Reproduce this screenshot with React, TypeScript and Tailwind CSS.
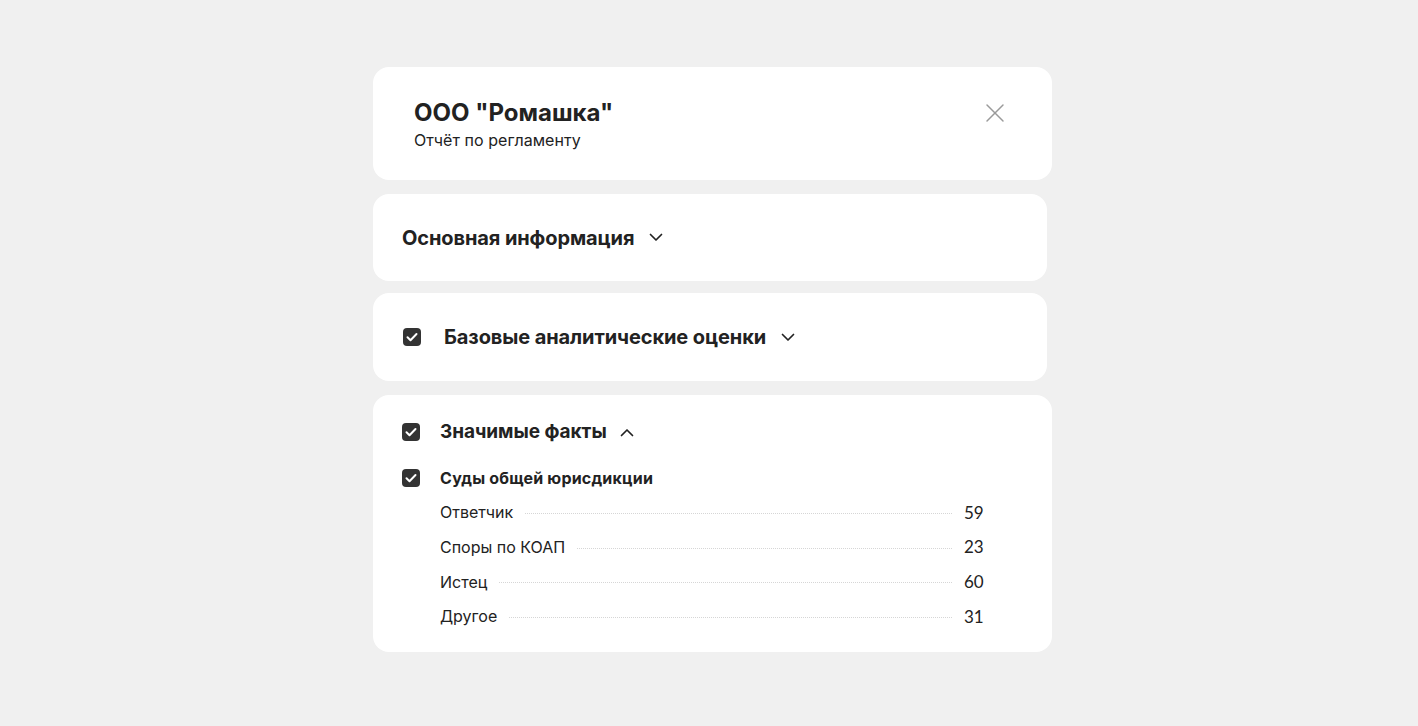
import { X } from 'lucide-react'

function Check({ className = '' }: { className?: string }) {
  return (
    <svg width="18" height="18" viewBox="0 0 18 18" className={className}>
      <rect x="0" y="0" width="18" height="18" rx="4" fill="#333333" />
      <path d="M4.5 9.3l3 2.9 6-6.2" fill="none" stroke="#fff" strokeWidth="2" strokeLinecap="round" strokeLinejoin="round" />
    </svg>
  )
}

function Chevron({ up = false }: { up?: boolean }) {
  return (
    <svg width="14" height="9" viewBox="0 0 14 9" className="shrink-0">
      <path d={up ? 'M1.5 7.5L7 2l5.5 5.5' : 'M1.5 1.5L7 7l5.5-5.5'} fill="none" stroke="#222" strokeWidth="1.7" strokeLinecap="round" strokeLinejoin="round" />
    </svg>
  )
}

const facts = [
  { label: 'Ответчик', value: 59 },
  { label: 'Споры по КОАП', value: 23 },
  { label: 'Истец', value: 60 },
  { label: 'Другое', value: 31 },
]

export default function App() {
  return (
    <div className="min-h-[726px] bg-[#f0f0f0] pl-[373px] pt-[67px] text-[#222] font-['Inter','Noto_Sans',sans-serif]">
      <div className="w-[679px] h-[113px] bg-white rounded-[16px] pl-[41px] pr-[41px] pt-[30px] flex justify-between">
        <div>
          <h1 className="text-[24px] leading-[30px] font-bold tracking-[0px] mt-[1px]">ООО "Ромашка"</h1>
          <p className="text-[16px] leading-[22px] mt-[1px] tracking-[0.05px]">Отчёт по регламенту</p>
        </div>
        <button className="text-[#9a9a9a] h-[32px]">
          <X size={32} strokeWidth={1.1} />
        </button>
      </div>

      <div className="w-[674px] h-[87px] bg-white rounded-[16px] mt-[14px] px-[29px] flex items-center gap-[15px]">
        <span className="text-[20px] font-bold tracking-[-0.1px]">Основная информация</span>
        <Chevron />
      </div>

      <div className="w-[674px] h-[88px] bg-white rounded-[16px] mt-[12px] px-[30px] flex items-center">
        <Check className="mr-[23px]" />
        <span className="text-[20px] font-bold tracking-[-0.1px] mr-[15px]">Базовые аналитические оценки</span>
        <Chevron />
      </div>

      <div className="w-[679px] h-[257px] bg-white rounded-[16px] mt-[14px] pl-[29px] pr-[68px] pt-[25px]">
        <div className="flex items-center h-[24px]">
          <Check className="mr-[20px]" />
          <span className="text-[19px] font-bold tracking-[-0.05px] mr-[13px]">Значимые факты</span>
          <Chevron up />
        </div>
        <div className="flex items-center h-[24px] mt-[22px]">
          <Check className="mr-[20px]" />
          <span className="text-[16px] font-bold tracking-[0.2px]">Суды общей юрисдикции</span>
        </div>
        <div className="pl-[38px] mt-[5px]">
          {facts.map((f) => (
            <div key={f.label} className="flex items-center h-[34.7px] text-[16px]">
              <span>{f.label}</span>
              <span className="flex-1 mx-[12px] border-b border-dotted border-[#d6d6d6] mt-[2px]" />
              <span className="font-['Lato',sans-serif] text-[17px] w-[20px]">{f.value}</span>
            </div>
          ))}
        </div>
      </div>
    </div>
  )
}
